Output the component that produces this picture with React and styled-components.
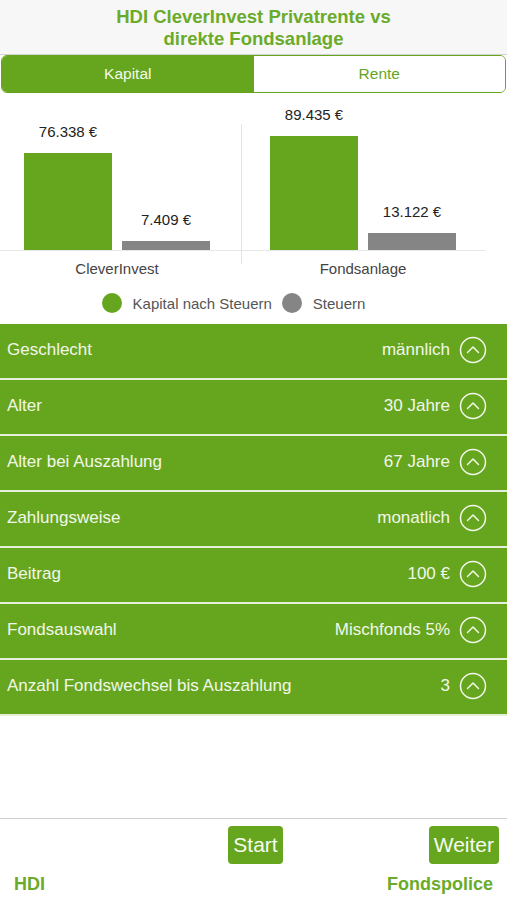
import React, { useState } from "react";
import styled, { createGlobalStyle } from "styled-components";

const green = "#66a61e";
const textGreen = "#6aab2a";

const GlobalStyle = createGlobalStyle`
  html, body {
    margin: 0;
    padding: 0;
    background: #ffffff;
    font-family: "Liberation Sans", Arial, sans-serif;
  }
  * { box-sizing: border-box; }
`;

const Page = styled.div`
  display: flex;
  flex-direction: column;
  height: 100vh;
  width: 100%;
  overflow: hidden;
`;

const Header = styled.header`
  height: 55px;
  padding-top: 6px;
  background: #f7f7f7;
  border-bottom: 1px solid #d4d4d4;
  text-align: center;
  color: ${textGreen};
  font-weight: bold;
  font-size: 18.5px;
  line-height: 22px;
`;

const Tabs = styled.div`
  display: flex;
  height: 38px;
  margin: 0 1px;
  border: 1.5px solid ${green};
  border-radius: 6px;
  overflow: hidden;
`;

const Tab = styled.button`
  flex: 1;
  border: none;
  margin: 0;
  padding: 0;
  font-family: inherit;
  font-size: 15.5px;
  cursor: pointer;
  background: ${(p) => (p.$active ? green : "#ffffff")};
  color: ${(p) => (p.$active ? "#f4f9ec" : green)};
`;

const Chart = styled.section`
  padding-top: 8px;
`;

const Groups = styled.div`
  display: flex;
  width: 485px;
`;

const Group = styled.div`
  position: relative;
  display: flex;
  flex-direction: column;
  width: ${(p) => p.$width}px;

  &::before {
    content: "";
    display: ${(p) => (p.$divider ? "block" : "none")};
    position: absolute;
    left: 0;
    top: 23px;
    height: 140px;
    width: 1px;
    background: #e4e4e4;
  }
`;

const Plot = styled.div`
  height: 150px;
  display: flex;
  align-items: flex-end;
  justify-content: center;
  gap: 10px;
  padding-right: ${(p) => p.$shift || 0}px;
  border-bottom: 1px solid #e6e6e6;
`;

const BarCol = styled.div`
  display: flex;
  flex-direction: column;
  align-items: center;
  width: 88px;
`;

const ValueLabel = styled.span`
  font-size: 15px;
  line-height: 16px;
  color: #222;
  margin-bottom: 13px;
  white-space: nowrap;
`;

const Bar = styled.div`
  width: 88px;
  background: ${(p) => (p.$kind === "tax" ? "#858585" : green)};
`;

const Category = styled.div`
  margin-top: 9px;
  padding-right: ${(p) => p.$shift || 0}px;
  text-align: center;
  font-size: 15px;
  line-height: 18px;
  color: #444;
`;

const Legend = styled.div`
  display: flex;
  justify-content: center;
  align-items: center;
  gap: 10px;
  width: 467px;
  height: 22px;
  margin: 14px 0 10px;
`;

const LegendItem = styled.div`
  display: flex;
  align-items: center;
  gap: 11px;
  font-size: 15px;
  color: #555;
`;

const Dot = styled.span`
  width: 20px;
  height: 20px;
  border-radius: 50%;
  background: ${(p) => p.$color};
`;

const List = styled.div`
  display: flex;
  flex-direction: column;
`;

const Row = styled.div`
  display: flex;
  align-items: center;
  height: 56px;
  padding: 0 20px 2px 7px;
  background: ${green};
  border-bottom: 2px solid #e6efd9;
  color: #f2f7ea;
  font-size: 17px;
`;

const RowLabel = styled.span`
  flex: 1;
`;

const RowValue = styled.span`
  margin-right: 9px;
`;

const Spacer = styled.div`
  flex: 1;
`;

const Footer = styled.footer`
  border-top: 1px solid #cfcfcf;
  padding: 7px 0 5px;
`;

const ButtonRow = styled.div`
  display: grid;
  grid-template-columns: 1fr auto 1fr;
  padding: 0 8px 0 12px;
`;

const ActionButton = styled.button`
  justify-self: ${(p) => p.$align || "center"};
  height: 38px;
  padding: 0 5px;
  border: none;
  border-radius: 4px;
  background: ${green};
  color: #f7fbf0;
  font-family: inherit;
  font-size: 21px;
  cursor: pointer;
`;

const BrandRow = styled.div`
  display: flex;
  justify-content: space-between;
  padding: 9px 14px 0 14px;
  font-size: 18px;
  line-height: 22px;
  font-weight: bold;
  color: ${textGreen};
`;

const ChevronCircle = () => (
  <svg width="28" height="28" viewBox="0 0 28 28" fill="none">
    <circle cx="14" cy="14" r="12.5" stroke="#f2f7ea" strokeWidth="1.5" />
    <path d="M8.5 16.5 L14 11 L19.5 16.5" stroke="#f2f7ea" strokeWidth="1.5" strokeLinecap="round" strokeLinejoin="round" />
  </svg>
);

const SCALE = 0.001273;

const groups = [
  { name: "CleverInvest", capital: 76338, tax: 7409, width: 241, shift: 7 },
  { name: "Fondsanlage", capital: 89435, tax: 13122, width: 244, shift: 0 },
];

const fields = [
  ["Geschlecht", "männlich"],
  ["Alter", "30 Jahre"],
  ["Alter bei Auszahlung", "67 Jahre"],
  ["Zahlungsweise", "monatlich"],
  ["Beitrag", "100 €"],
  ["Fondsauswahl", "Mischfonds 5%"],
  ["Anzahl Fondswechsel bis Auszahlung", "3"],
];

const fmt = (n) => n.toLocaleString("de-DE") + " €";

export default function App() {
  const [tab, setTab] = useState("kapital");

  return (
    <Page>
      <GlobalStyle />
      <Header>
        HDI CleverInvest Privatrente vs
        <br />
        direkte Fondsanlage
      </Header>

      <Tabs>
        <Tab $active={tab === "kapital"} onClick={() => setTab("kapital")}>Kapital</Tab>
        <Tab $active={tab === "rente"} onClick={() => setTab("rente")}>Rente</Tab>
      </Tabs>

      <Chart>
        <Groups>
          {groups.map((g, i) => (
            <Group key={g.name} $divider={i > 0} $width={g.width}>
              <Plot $shift={g.shift}>
                <BarCol>
                  <ValueLabel>{fmt(g.capital)}</ValueLabel>
                  <Bar style={{ height: Math.round(g.capital * SCALE) }} />
                </BarCol>
                <BarCol>
                  <ValueLabel>{fmt(g.tax)}</ValueLabel>
                  <Bar $kind="tax" style={{ height: Math.round(g.tax * SCALE) }} />
                </BarCol>
              </Plot>
              <Category $shift={g.shift}>{g.name}</Category>
            </Group>
          ))}
        </Groups>
        <Legend>
          <LegendItem>
            <Dot $color={green} />
            Kapital nach Steuern
          </LegendItem>
          <LegendItem>
            <Dot $color="#858585" />
            Steuern
          </LegendItem>
        </Legend>
      </Chart>

      <List>
        {fields.map(([label, value]) => (
          <Row key={label}>
            <RowLabel>{label}</RowLabel>
            <RowValue>{value}</RowValue>
            <ChevronCircle />
          </Row>
        ))}
      </List>

      <Spacer />

      <Footer>
        <ButtonRow>
          <span />
          <ActionButton>Start</ActionButton>
          <ActionButton $align="end">Weiter</ActionButton>
        </ButtonRow>
        <BrandRow>
          <span>HDI</span>
          <span>Fondspolice</span>
        </BrandRow>
      </Footer>
    </Page>
  );
}
